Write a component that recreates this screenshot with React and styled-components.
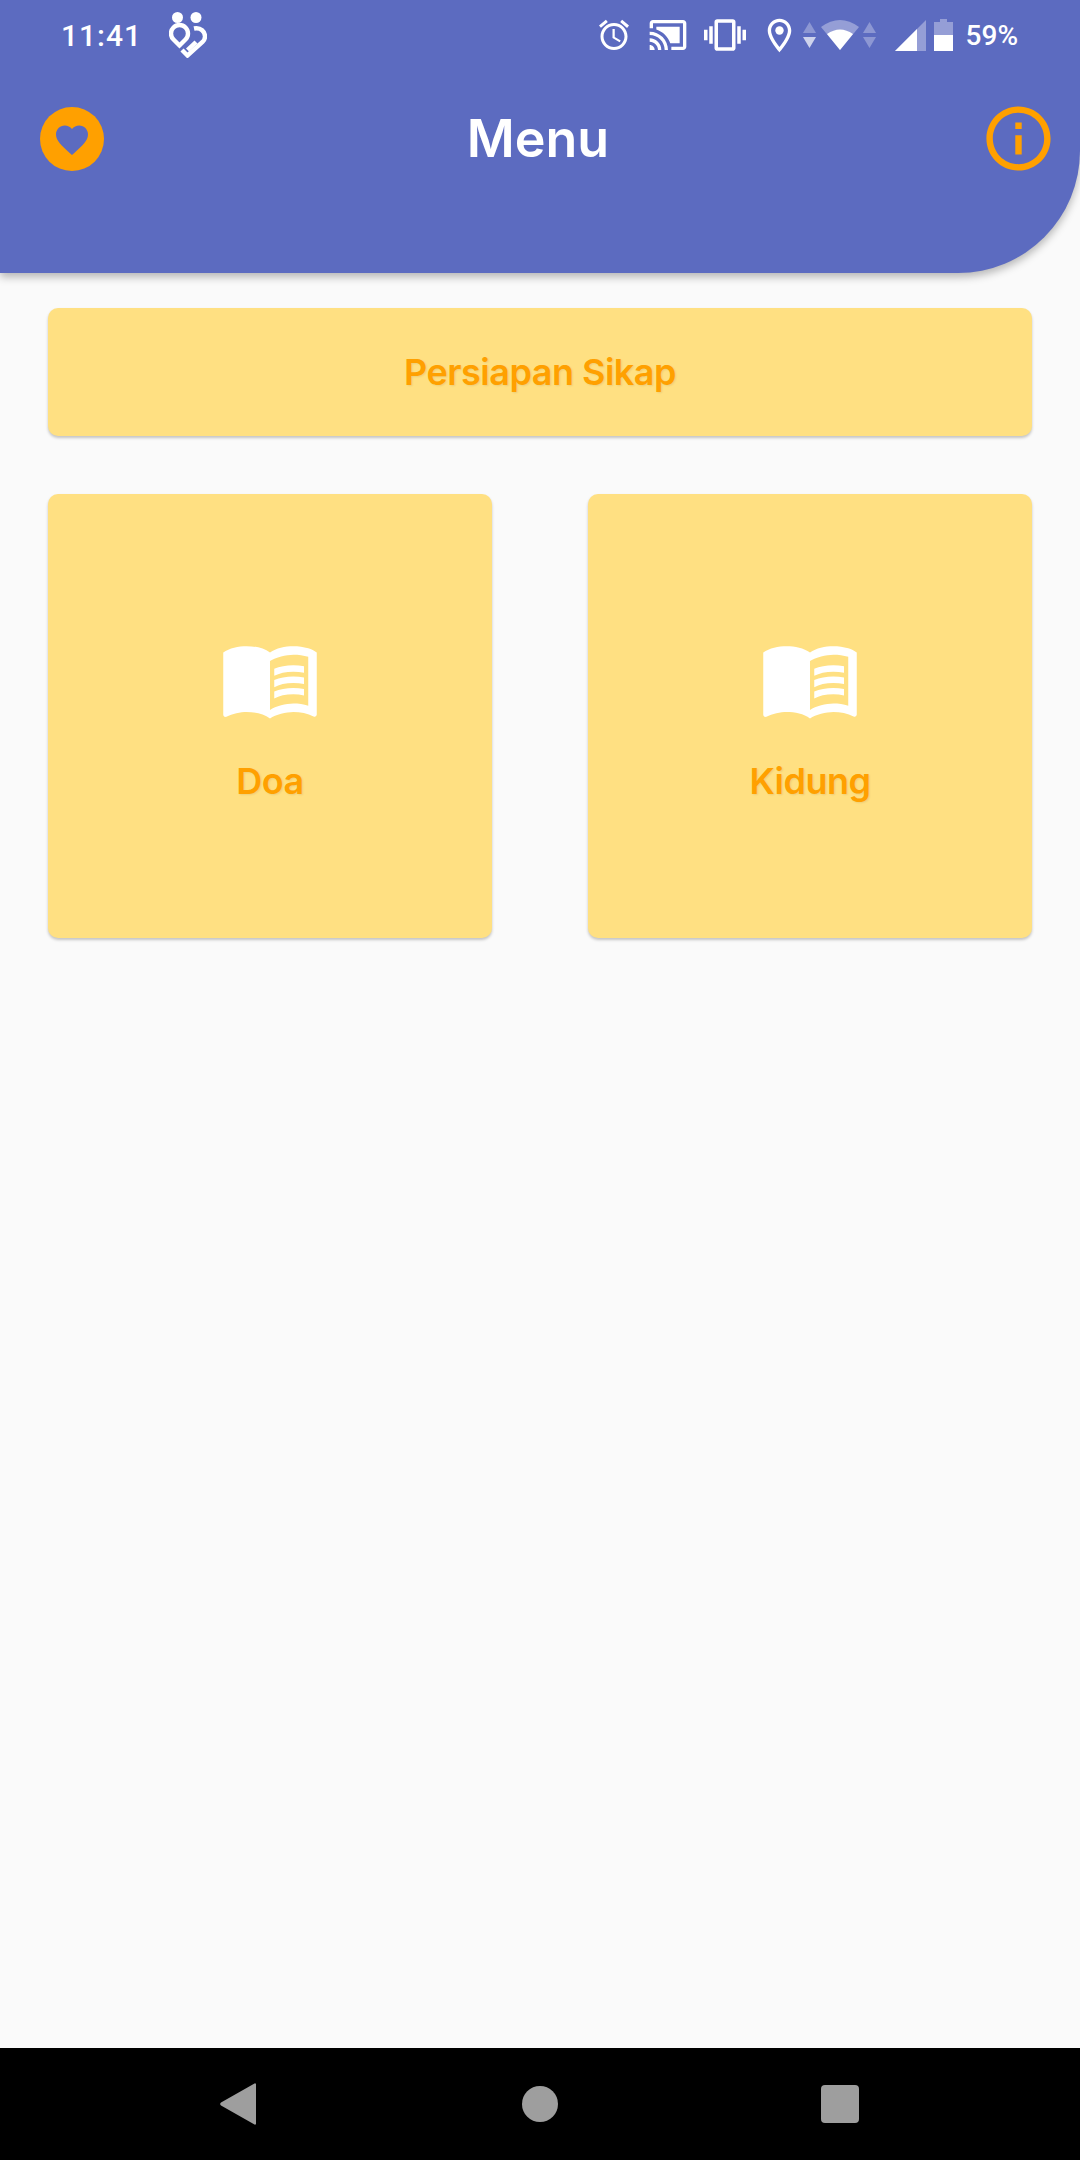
import React from "react";
import styled, { createGlobalStyle } from "styled-components";

const GlobalStyle = createGlobalStyle`
  html, body {
    margin: 0;
    padding: 0;
    background: #fafafa;
  }
`;

const Page = styled.div`
  width: 1080px;
  height: 2160px;
  display: flex;
  flex-direction: column;
  background: #fafafa;
  overflow: hidden;
  font-family: Inter, "Liberation Sans", sans-serif;
`;

const Header = styled.header`
  height: 273px;
  flex: none;
  background: #5c6bc0;
  border-bottom-right-radius: 122px;
  box-shadow: 0 4px 8px rgba(0, 0, 0, 0.28);
`;

const StatusBar = styled.div`
  height: 70px;
  padding: 0 62px 0 61px;
  display: flex;
  align-items: center;
  justify-content: space-between;
  color: #fff;
  font-family: Roboto, sans-serif;
`;

const StatusGroup = styled.div`
  display: flex;
  align-items: center;
`;

const Clock = styled.span`
  font-size: 30px;
  font-weight: 500;
  letter-spacing: 1px;
`;

const Percent = styled.span`
  margin-left: 13px;
  font-size: 28px;
  font-weight: 500;
`;

const StatusIcon = styled.svg`
  display: block;
  flex: none;
  width: ${(p) => p.$w}px;
  height: ${(p) => p.$h}px;
  margin-left: ${(p) => p.$ml || 0}px;
  fill: #fff;
`;

const LogoStroke = styled.path`
  fill: none;
  stroke: #fff;
  stroke-width: 4.4;
`;

const TitleRow = styled.div`
  height: 77px;
  margin-top: 30px;
  padding: 0 23px 0 40px;
  display: flex;
  align-items: center;
  justify-content: space-between;
`;

const Title = styled.h1`
  margin: 0 8px 0 0;
  color: #fff;
  font-size: 52px;
  font-weight: 600;
`;

const RoundIcon = styled.svg`
  display: block;
  width: ${(p) => p.$size}px;
  height: ${(p) => p.$size}px;
`;

const Content = styled.main`
  flex: 1;
  padding: 35px 48px 0;
  display: flex;
  flex-direction: column;
  gap: 58px;
`;

const Card = styled.div`
  background: #ffe082;
  border-radius: 10px;
  box-shadow: 0 2px 3px rgba(0, 0, 0, 0.22);
  display: flex;
  flex-direction: column;
  align-items: center;
  justify-content: center;
`;

const WideCard = styled(Card)`
  height: 128px;
`;

const SquareCard = styled(Card)`
  height: 444px;
  box-sizing: border-box;
  padding-bottom: 3px;
`;

const CardGrid = styled.div`
  display: grid;
  grid-template-columns: repeat(2, 444px);
  justify-content: space-between;
`;

const CardLabel = styled.span`
  color: #ffa000;
  font-size: 36px;
  line-height: 42px;
  font-weight: 600;
  letter-spacing: -0.5px;
  text-shadow: 1px 1px 2px rgba(0, 0, 0, 0.08);
`;

const BookIcon = styled.svg`
  display: block;
  width: 102px;
  height: 102px;
  fill: #fff;
  margin-bottom: 31px;
`;

const NavBar = styled.nav`
  height: 112px;
  flex: none;
  background: #000;
  display: grid;
  grid-template-columns: repeat(3, 300px);
  justify-content: center;
  align-items: center;
  justify-items: center;
`;

const NavBack = styled.svg`
  display: block;
  width: 36px;
  height: 42px;
  margin-left: -4px;
  fill: #9e9e9e;
`;

const NavHome = styled.span`
  display: block;
  width: 36px;
  height: 36px;
  border-radius: 50%;
  background: #9e9e9e;
`;

const NavRecent = styled.span`
  display: block;
  width: 38px;
  height: 38px;
  border-radius: 4px;
  background: #9e9e9e;
`;

const Book = () => (
  <BookIcon viewBox="0 0 24 24">
    <path d="M21 5c-1.11-.35-2.33-.5-3.5-.5-1.95 0-4.05.4-5.5 1.5-1.45-1.1-3.55-1.5-5.5-1.5S2.45 4.9 1 6v14.65c0 .25.25.5.5.5.1 0 .15-.05.25-.05C3.1 20.45 5.05 20 6.5 20c1.95 0 4.05.4 5.5 1.5 1.35-.85 3.8-1.5 5.5-1.5 1.65 0 3.35.3 4.75 1.05.1.05.15.05.25.05.25 0 .5-.25.5-.5V6c-.6-.45-1.25-.75-2-1zm0 13.5c-1.1-.35-2.3-.5-3.5-.5-1.7 0-4.15.65-5.5 1.5V8c1.35-.85 3.8-1.5 5.5-1.5 1.2 0 2.4.15 3.5.5v11.5z" />
    <path d="M17.5 10.5c.88 0 1.73.09 2.5.26V9.24c-.79-.15-1.64-.24-2.5-.24-1.7 0-3.24.29-4.5.83v1.66c1.13-.64 2.7-.99 4.5-.99zM13 12.49v1.66c1.13-.64 2.7-.99 4.5-.99.88 0 1.73.09 2.5.26V11.9c-.79-.15-1.64-.24-2.5-.24-1.7 0-3.24.3-4.5.83zM17.5 14.33c-1.7 0-3.24.29-4.5.83v1.66c1.13-.64 2.7-.99 4.5-.99.88 0 1.73.09 2.5.26v-1.52c-.79-.16-1.64-.24-2.5-.24z" />
  </BookIcon>
);

const Arrows = ({ ml, down }) => (
  <StatusIcon $w={13} $h={26} $ml={ml} viewBox="0 0 13 26">
    <path d="M6.5 0L13 11H0z" opacity="0.3" />
    <path d="M6.5 26L0 15h13z" opacity={down} />
  </StatusIcon>
);

const App = () => (
  <Page>
    <GlobalStyle />
    <Header>
      <StatusBar>
        <StatusGroup>
          <Clock>11:41</Clock>
          {/* logo app dari notifikasi */}
          <StatusIcon $w={38} $h={46} $ml={27} viewBox="0 0 38 46">
            <circle cx="8.5" cy="5.5" r="5.5" />
            <circle cx="27" cy="5.5" r="5.5" />
            <LogoStroke d="M10.5 33.5L4.5 27.5A8.5 8.5 0 1 1 16.5 27.5z" />
            <LogoStroke d="M25 16.5C32 15 36 20 36 24.5C36 27 35 28.500 33.5 30L18.5 43.5L13 38" />
            <LogoStroke d="M18.5 38L27 30" />
          </StatusIcon>
        </StatusGroup>
        <StatusGroup>
          <StatusIcon $w={36} $h={36} viewBox="0 0 24 24">
            <path d="M22 5.72l-4.6-3.86-1.29 1.53 4.6 3.86L22 5.72zM7.88 3.39L6.6 1.86 2 5.71l1.29 1.53 4.59-3.85zM12.5 8H11v6l4.75 2.85.75-1.23-4-2.37V8zM12 4c-4.97 0-9 4.03-9 9s4.02 9 9 9c4.97 0 9-4.03 9-9s-4.03-9-9-9zm0 16c-3.87 0-7-3.13-7-7s3.13-7 7-7 7 3.13 7 7-3.13 7-7 7z" />
          </StatusIcon>
          <StatusIcon $w={40} $h={40} $ml={16} viewBox="0 0 24 24">
            <path d="M1 18v3h3c0-1.66-1.34-3-3-3zm0-4v2c2.76 0 5 2.24 5 5h2c0-3.87-3.13-7-7-7zm18-7H5v1.63c3.96 1.28 7.09 4.41 8.37 8.37H19V7zM1 10v2c4.97 0 9 4.03 9 9h2c0-6.08-4.93-11-11-11zm20-7H3c-1.1 0-2 .9-2 2v3h2V5h18v14h-7v2h7c1.1 0 2-.9 2-2V5c0-1.1-.9-2-2-2z" />
          </StatusIcon>
          <StatusIcon $w={42} $h={42} $ml={16} viewBox="0 0 24 24">
            <path d="M0 15h2V9H0v6zm3 2h2V7H3v10zm19-8v6h2V9h-2zm-3 8h2V7h-2v10zM16.5 3h-9C6.67 3 6 3.67 6 4.5v15c0 .83.67 1.5 1.5 1.5h9c.83 0 1.5-.67 1.5-1.5v-15c0-.83-.67-1.5-1.5-1.5zM16 19H8V5h8v14z" />
          </StatusIcon>
          <StatusIcon $w={33} $h={37} $ml={17} viewBox="3 1 18 22">
            <path d="M12 2C8.13 2 5 5.13 5 9c0 5.25 7 13 7 13s7-7.75 7-13c0-3.87-3.13-7-7-7zM7 9c0-2.76 2.24-5 5-5s5 2.24 5 5c0 2.88-2.88 7.19-5 9.88C9.92 16.21 7 11.85 7 9z" />
            <circle cx="12" cy="9" r="2.5" />
          </StatusIcon>
          <Arrows ml={7} down={0.7} />
          <StatusIcon $w={38} $h={30} $ml={5} viewBox="0 0 38 30">
            <path d="M0 7Q19-7 38 7L19 30z" opacity="0.35" />
            <path d="M6 14Q19 5 32 14L19 30z" />
          </StatusIcon>
          <Arrows ml={4} down={0.3} />
          <StatusIcon $w={31} $h={31} $ml={19} viewBox="0 0 31 31">
            <path d="M31 0v31H0z" opacity="0.35" />
            <path d="M22 9v22H0z" />
          </StatusIcon>
          <StatusIcon $w={19} $h={32} $ml={8} viewBox="0 0 19 32">
            <path d="M6 0h7v3h6v13H0V3h6z" opacity="0.35" />
            <path d="M0 16h19v16H0z" />
          </StatusIcon>
          <Percent>59%</Percent>
        </StatusGroup>
      </StatusBar>
      <TitleRow>
        <RoundIcon $size={64} viewBox="0 0 64 64">
          <circle cx="32" cy="32" r="32" fill="#ffa000" />
          <path
            d="M32 48L29.7 45.9C21.5 38.5 16 33.5 16 27.4C16 22.4 19.9 18.5 24.8 18.5C27.6 18.5 30.3 19.8 32 21.9C33.7 19.8 36.4 18.5 39.2 18.5C44.1 18.5 48 22.4 48 27.4C48 33.5 42.5 38.5 34.3 45.9z"
            fill="#5c6bc0"
          />
        </RoundIcon>
        <Title>Menu</Title>
        <RoundIcon $size={77} viewBox="0 0 24 24">
          <path
            d="M11 7h2v2h-2zm0 4h2v6h-2zm1-9C6.48 2 2 6.48 2 12s4.48 10 10 10 10-4.48 10-10S17.52 2 12 2zm0 18c-4.41 0-8-3.59-8-8s3.59-8 8-8 8 3.59 8 8-3.59 8-8 8z"
            fill="#ffa000"
          />
        </RoundIcon>
      </TitleRow>
    </Header>
    <Content>
      <WideCard>
        <CardLabel>Persiapan Sikap</CardLabel>
      </WideCard>
      <CardGrid>
        <SquareCard>
          <Book />
          <CardLabel>Doa</CardLabel>
        </SquareCard>
        <SquareCard>
          <Book />
          <CardLabel>Kidung</CardLabel>
        </SquareCard>
      </CardGrid>
    </Content>
    <NavBar>
      <NavBack viewBox="0 0 36 42">
        <path d="M34.5.5L1 19.5a2 2 0 0 0 0 3L34.5 41.5a1 1 0 0 0 1.5-1V1.5a1 1 0 0 0-1.5-1z" />
      </NavBack>
      <NavHome />
      <NavRecent />
    </NavBar>
  </Page>
);

export default App;
